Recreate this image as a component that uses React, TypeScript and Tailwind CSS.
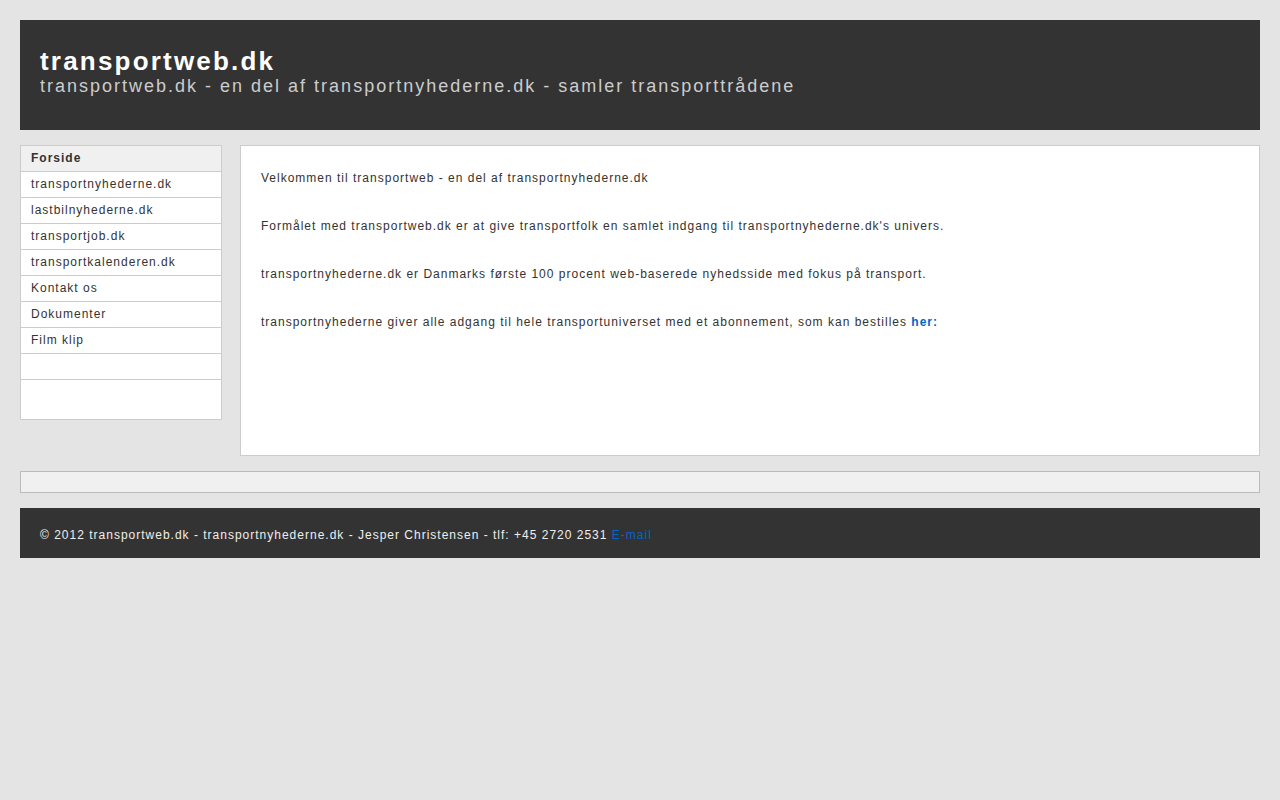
import React from "react";

const menu = [
  "transportnyhederne.dk",
  "lastbilnyhederne.dk",
  "transportjob.dk",
  "transportkalenderen.dk",
  "Kontakt os",
  "Dokumenter",
  "Film klip",
];

export default function App() {
  return (
    <div className="min-h-[800px] bg-[#e4e4e4] p-5 font-['Liberation_Sans',Arial,sans-serif] text-[#333]">
      <header className="h-[110px] bg-[#333333] px-5 pt-[26px]">
        <h1 className="text-[26px] font-bold leading-[30px] tracking-[2.2px] text-white">transportweb.dk</h1>
        <p className="text-[18px] leading-[20px] tracking-[2px] text-[#cccccc]">
          transportweb.dk - en del af transportnyhederne.dk - samler transporttrådene
        </p>
      </header>

      <div className="mt-[15px] flex items-start gap-[18px]">
        <nav className="w-[202px] shrink-0 border border-[#cccccc] bg-white text-[12px] tracking-[1px]">
          <div className="h-[26px] border-b border-[#cccccc] bg-[#f0f0f0] pl-[10px] font-bold leading-[25px]">Forside</div>
          {menu.map((m) => (
            <div key={m} className="h-[26px] border-b border-[#cccccc] pl-[10px] leading-[25px]">
              {m}
            </div>
          ))}
          <div className="h-[26px] border-b border-[#cccccc]"></div>
          <div className="h-[39px]"></div>
        </nav>

        <main className="h-[311px] flex-1 border border-[#cccccc] bg-white px-5 pt-[24px] text-[12px] leading-[16px] tracking-[1px]">
          <p>Velkommen til transportweb - en del af transportnyhederne.dk</p>
          <p className="mt-[32px]">
            Formålet med transportweb.dk er at give transportfolk en samlet indgang til transportnyhederne.dk's univers.
          </p>
          <p className="mt-[32px]">
            transportnyhederne.dk er Danmarks første 100 procent web-baserede nyhedsside med fokus på transport.
          </p>
          <p className="mt-[32px]">
            transportnyhederne giver alle adgang til hele transportuniverset med et abonnement, som kan bestilles{" "}
            <a className="font-bold text-[#0066cc]">her:</a>
          </p>
        </main>
      </div>

      <div className="mt-[15px] h-[22px] border border-[#bbbbbb] bg-[#f0f0f0]"></div>

      <footer className="mt-[15px] flex h-[50px] items-center bg-[#333333] px-5 pt-[4px] text-[12px] tracking-[1px] text-[#eeeeee]">
        <span>
          © 2012 transportweb.dk - transportnyhederne.dk - Jesper Christensen - tlf: +45 2720 2531{" "}
          <a className="text-[#0066cc]">E-mail</a>
        </span>
      </footer>
    </div>
  );
}
